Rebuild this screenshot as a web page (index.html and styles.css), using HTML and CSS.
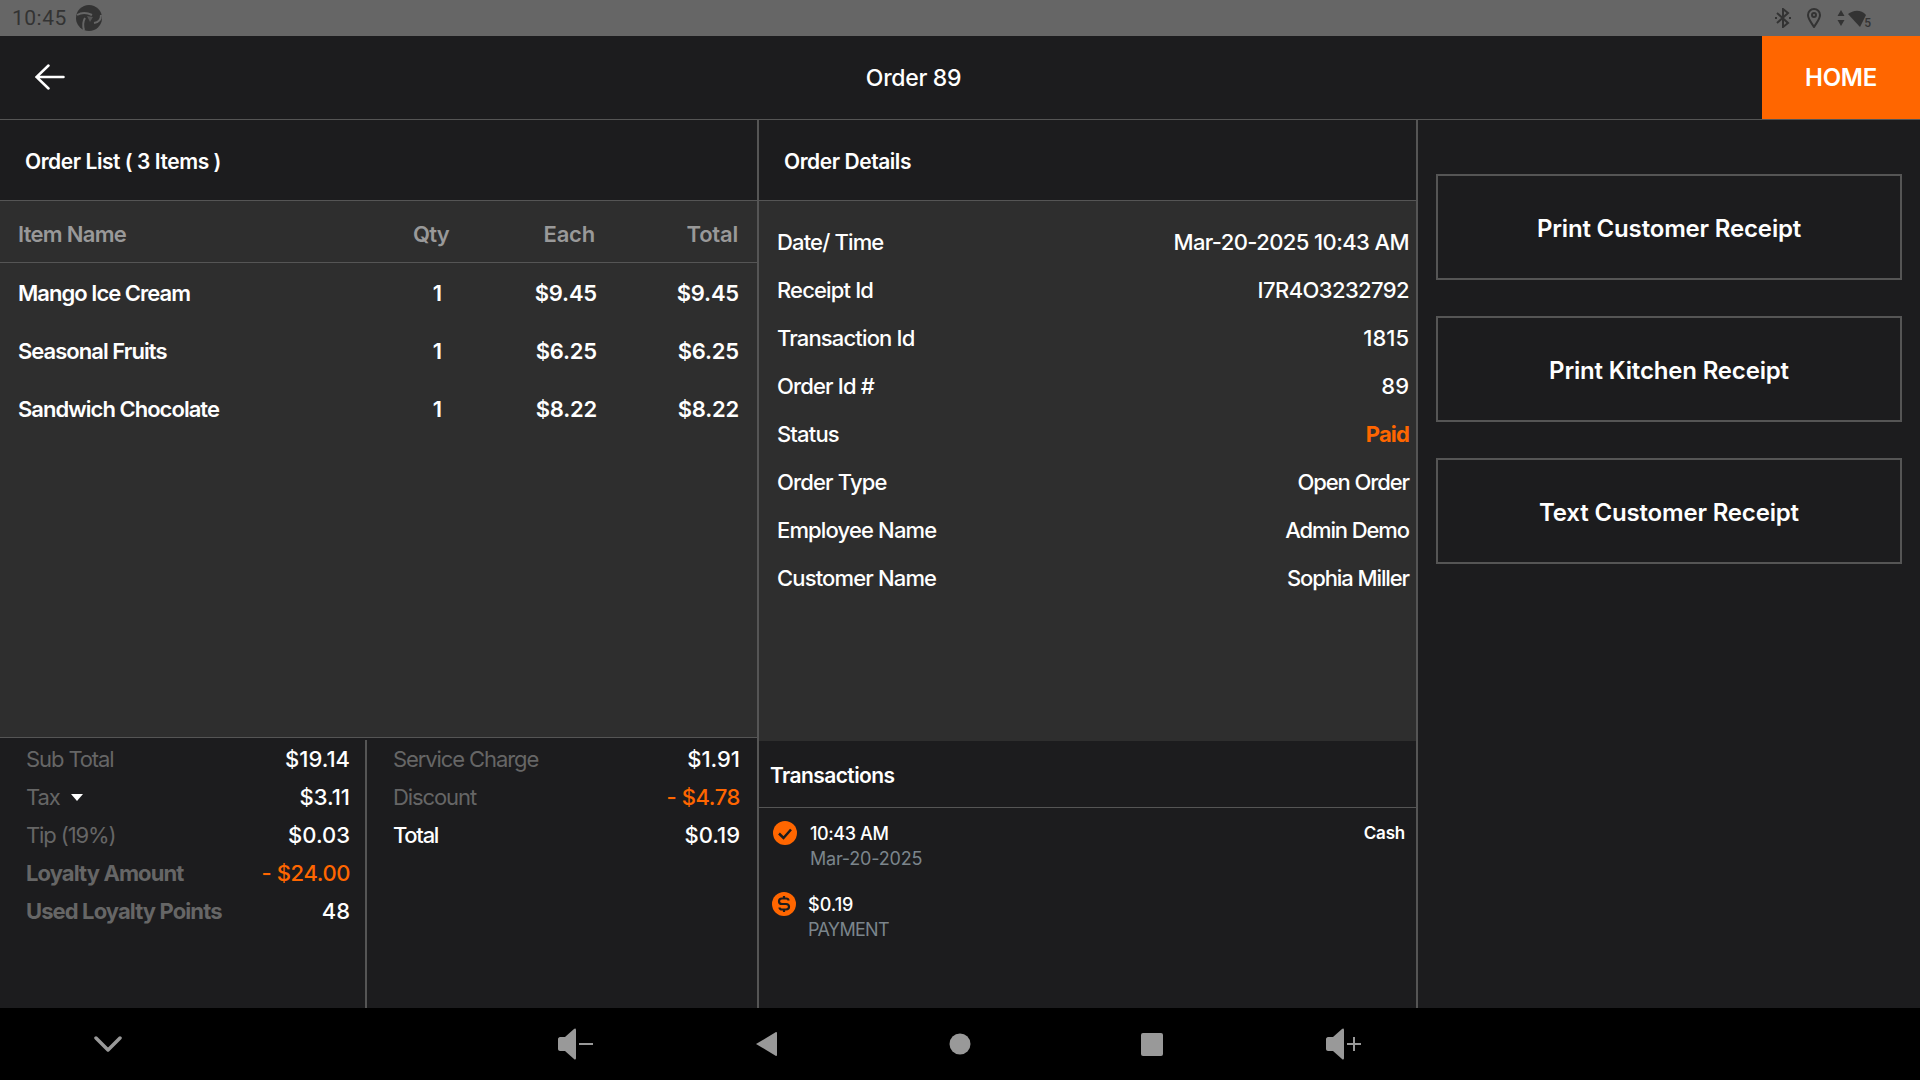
FILE: index.html
```html
<!DOCTYPE html>
<html lang="en">
<head>
  <meta charset="UTF-8">
  <title>Order 89</title>
  <link rel="stylesheet" href="styles.css">
</head>
<body>
  <div class="status-bar">
    <div class="status-left">
      <span class="clock">10:45</span>
      <svg class="sync-icon" width="26" height="26" viewBox="0 0 26 26">
        <circle cx="13" cy="13" r="13" fill="#333"/>
        <path d="M1 10Q8 6 16 10M25 10Q25 17 18 18M8 25Q6 18 9 13" fill="none" stroke="#666" stroke-width="2"/>
        <path d="M11 11l6 1-3 5z" fill="#555"/>
      </svg>
    </div>
    <div class="status-right">
      <svg width="16" height="20" viewBox="0 0 16 20" fill="none" stroke="#333" stroke-width="2">
        <path d="M2 5l11 10-5 4V1l5 4L2 15"/>
        <path d="M0 10h2M14 10h2" />
      </svg>
      <svg width="14" height="20" viewBox="0 0 14 20" fill="none" stroke="#333" stroke-width="2">
        <path d="M7 19C4 14 1 11 1 7a6 6 0 0 1 12 0c0 4-3 7-6 12z"/>
        <circle cx="7" cy="7" r="2"/>
      </svg>
      <div class="net">
        <svg width="8" height="16" viewBox="0 0 8 16" fill="#333">
          <path d="M4 0l3.500 6H.5zM4 16L.5 10h7z"/>
        </svg>
        <svg width="18" height="17" viewBox="0 0 18 17" fill="#333">
          <path d="M0 4C5 0 13-1 18 5L12 17z"/>
        </svg>
        <span class="net-num">5</span>
      </div>
    </div>
  </div>

  <header class="top-bar">
    <div class="back">
      <svg width="30" height="26" viewBox="0 0 30 26" fill="none" stroke="#fff" stroke-width="2.500" stroke-linecap="round">
        <path d="M1.500 13h27M13.500 1.500L1.500 13l12 11.500"/>
      </svg>
    </div>
    <div class="top-title">Order 89</div>
    <div class="home-btn">HOME</div>
  </header>

  <main class="content">
    <section class="col-list">
      <div class="panel-head">Order List ( 3 Items )</div>
      <div class="list-body">
        <div class="item-row item-head">
          <span class="c-name">Item Name</span>
          <span class="c-qty">Qty</span>
          <span class="c-each">Each</span>
          <span class="c-total">Total</span>
        </div>
        <div class="item-row">
          <span class="c-name">Mango Ice Cream</span>
          <span class="c-qty">1</span>
          <span class="c-each">$9.45</span>
          <span class="c-total">$9.45</span>
        </div>
        <div class="item-row">
          <span class="c-name">Seasonal Fruits</span>
          <span class="c-qty">1</span>
          <span class="c-each">$6.25</span>
          <span class="c-total">$6.25</span>
        </div>
        <div class="item-row">
          <span class="c-name">Sandwich Chocolate</span>
          <span class="c-qty">1</span>
          <span class="c-each">$8.22</span>
          <span class="c-total">$8.22</span>
        </div>
      </div>
      <div class="totals">
        <div class="totals-col">
          <div class="t-row"><span class="t-label">Sub Total</span><span class="num">$19.14</span></div>
          <div class="t-row">
            <span class="t-label">Tax <i class="caret"></i></span><span class="num">$3.11</span>
          </div>
          <div class="t-row"><span class="t-label">Tip (19%)</span><span class="num">$0.03</span></div>
          <div class="t-row"><span class="t-label t-bold">Loyalty Amount</span><span class="num neg">- $24.00</span></div>
          <div class="t-row"><span class="t-label t-bold">Used Loyalty Points</span><span class="num">48</span></div>
        </div>
        <div class="totals-col second">
          <div class="t-row"><span class="t-label">Service Charge</span><span class="num">$1.91</span></div>
          <div class="t-row"><span class="t-label">Discount</span><span class="num neg">- $4.78</span></div>
          <div class="t-row"><span class="t-total">Total</span><span class="num">$0.19</span></div>
        </div>
      </div>
    </section>

    <section class="col-details">
      <div class="panel-head">Order Details</div>
      <div class="details-body">
        <div class="d-row"><span>Date/ Time</span><span class="d-code">Mar-20-2025 10:43 AM</span></div>
        <div class="d-row"><span>Receipt Id</span><span class="d-code">I7R4O3232792</span></div>
        <div class="d-row"><span>Transaction Id</span><span class="num">1815</span></div>
        <div class="d-row"><span>Order Id #</span><span class="num">89</span></div>
        <div class="d-row"><span>Status</span><span class="orange paid">Paid</span></div>
        <div class="d-row"><span>Order Type</span><span class="d-val">Open Order</span></div>
        <div class="d-row"><span>Employee Name</span><span class="d-val">Admin Demo</span></div>
        <div class="d-row"><span>Customer Name</span><span class="d-val">Sophia Miller</span></div>
      </div>
      <div class="transactions">
        <div class="tx-head">Transactions</div>
        <div class="tx-row">
          <svg class="tx-icon" width="24" height="24" viewBox="0 0 24 24">
            <circle cx="12" cy="12" r="12" fill="#ff6600"/>
            <path d="M6 12.500l4.500 4.500L18 8.500" fill="none" stroke="#1c1c1e" stroke-width="2.500"/>
          </svg>
          <div class="tx-text">
            <div class="tx-main">10:43 AM</div>
            <div class="tx-sub">Mar-20-2025</div>
          </div>
          <div class="tx-type">Cash</div>
        </div>
        <div class="tx-row tx-pay">
          <svg class="tx-icon" width="24" height="24" viewBox="0 0 24 24">
            <circle cx="12" cy="12" r="12" fill="#ff6600"/>
            <path d="M16.500 8.500c0-1-1-2-2.500-2h-4c-1.800 0-3 1.100-3 2.700s1.200 2.800 3 2.800h4c1.800 0 3 1.100 3 2.800s-1.200 2.700-3 2.700h-4c-1.500 0-2.500-1-2.500-2M12 4v2.500M12 17.500V20" fill="none" stroke="#1c1c1e" stroke-width="2.200"/>
          </svg>
          <div class="tx-text">
            <div class="tx-main">$0.19</div>
            <div class="tx-sub">PAYMENT</div>
          </div>
        </div>
      </div>
    </section>

    <section class="col-actions">
      <div class="action-btn">Print Customer Receipt</div>
      <div class="action-btn">Print Kitchen Receipt</div>
      <div class="action-btn">Text Customer Receipt</div>
    </section>
  </main>

  <nav class="nav-bar">
    <div class="nav-left">
      <svg width="28" height="18" viewBox="0 0 28 18" fill="none" stroke="#999" stroke-width="3.500" stroke-linecap="round" stroke-linejoin="round">
        <path d="M2 3l12 12L26 3"/>
      </svg>
    </div>
    <div class="nav-slot">
      <svg width="36" height="32" viewBox="0 0 36 32" fill="#999">
        <path d="M2 9h5L16 1c1-1 2-.500 2 1v28c0 1.500-1 2-2 1L7 23H2c-1 0-2-1-2-2V11c0-1 1-2 2-2z"/>
        <rect x="21" y="15" width="14" height="2"/>
      </svg>
    </div>
    <div class="nav-slot">
      <svg class="nav-back" width="21" height="24" viewBox="0 0 21 24" fill="#999">
        <path d="M20 0c.500 0 1 .500 1 1v22c0 .500-.500 1-1 1L0 12z"/>
      </svg>
    </div>
    <div class="nav-slot">
      <svg width="22" height="22" viewBox="0 0 22 22" fill="#999">
        <circle cx="11" cy="11" r="10.500"/>
      </svg>
    </div>
    <div class="nav-slot">
      <svg width="22" height="23" viewBox="0 0 22 23" fill="#999">
        <rect width="22" height="23" rx="2"/>
      </svg>
    </div>
    <div class="nav-slot">
      <svg width="36" height="32" viewBox="0 0 36 32" fill="#999">
        <path d="M2 9h5L16 1c1-1 2-.500 2 1v28c0 1.500-1 2-2 1L7 23H2c-1 0-2-1-2-2V11c0-1 1-2 2-2z"/>
        <path d="M21 15h6V9h2v6h6v2h-6v6h-2v-6h-6z"/>
      </svg>
    </div>
  </nav>
</body>
</html>
```

FILE: styles.css
```css
* {
  margin: 0;
  padding: 0;
  box-sizing: border-box;
}

body {
  width: 1920px;
  height: 1080px;
  display: flex;
  flex-direction: column;
  overflow: hidden;
  background: #1c1c1e;
  color: #fff;
  font-family: 'Inter', sans-serif;
  font-size: 22px;
  font-weight: 500;
  letter-spacing: -0.85px;
}

.orange {
  color: #ff6600;
}

.num {
  letter-spacing: 0;
}

.num.neg {
  color: #ff6600;
  letter-spacing: -0.4px;
}

/* Status bar */
.status-bar {
  height: 36px;
  flex-shrink: 0;
  display: flex;
  justify-content: space-between;
  align-items: center;
  padding: 0 49px 0 12px;
  background: #666;
  color: #333;
}

.status-left {
  display: flex;
  align-items: center;
  gap: 9px;
}

.clock {
  font-family: 'Roboto', sans-serif;
  font-size: 21px;
  font-weight: 400;
  letter-spacing: 0.5px;
}

.status-right {
  display: flex;
  align-items: center;
  gap: 16px;
}

.net {
  display: flex;
  align-items: center;
  gap: 3px;
  position: relative;
  padding-right: 5px;
}

.net-num {
  position: absolute;
  right: 0;
  bottom: -2px;
  font-family: 'Roboto', sans-serif;
  font-size: 12px;
  line-height: 11px;
  letter-spacing: 0;
}

/* Top bar */
.top-bar {
  height: 84px;
  flex-shrink: 0;
  display: flex;
  align-items: center;
  border-bottom: 1px solid #555;
}

.back {
  width: 140px;
  padding-left: 35px;
  display: flex;
  align-items: center;
  margin-top: -2px;
}

.top-title {
  flex: 1;
  text-align: center;
  font-size: 23px;
  letter-spacing: -0.3px;
  padding: 1px 75px 0 0;
}

.home-btn {
  width: 158px;
  height: 83px;
  display: flex;
  align-items: center;
  justify-content: center;
  background: #ff6600;
  font-size: 24px;
  font-weight: 600;
  letter-spacing: -0.3px;
}

/* Main columns */
.content {
  flex: 1;
  display: flex;
  min-height: 0;
}

.col-list {
  width: 759px;
  display: flex;
  flex-direction: column;
  border-right: 2px solid #555;
}

.col-details {
  width: 659px;
  display: flex;
  flex-direction: column;
  border-right: 2px solid #555;
}

.col-actions {
  flex: 1;
  display: flex;
  flex-direction: column;
  gap: 36px;
  padding: 54px 18px 0 18px;
}

.panel-head {
  height: 81px;
  flex-shrink: 0;
  display: flex;
  align-items: center;
  padding: 2px 0 0 25px;
  border-bottom: 1px solid #555;
  font-size: 21px;
  font-weight: 600;
  letter-spacing: -0.45px;
}

/* Order list */
.list-body {
  height: 537px;
  flex-shrink: 0;
  background: #2e2e2e;
  border-bottom: 1px solid #555;
}

.item-row {
  height: 58px;
  display: flex;
  align-items: center;
  padding: 0 18px;
  font-weight: 600;
  letter-spacing: -0.97px;
}

.item-head {
  height: 62px;
  margin-bottom: 1px;
  padding-top: 5px;
  border-bottom: 1px solid #555;
  color: #999;
  letter-spacing: -0.7px;
}

.c-name {
  flex: 1;
}

.c-qty {
  width: 40px;
  text-align: center;
}

.c-each {
  width: 140px;
  text-align: right;
  letter-spacing: -0.2px;
}

.c-total {
  width: 142px;
  text-align: right;
  letter-spacing: -0.2px;
}

.item-head .c-qty {
  margin: 0 4px 0 -4px;
  text-align: left;
}

.item-head .c-each {
  padding-right: 2px;
}

.item-head .c-total {
  padding-right: 1px;
}

/* Totals under the list */
.totals {
  flex: 1;
  display: flex;
  padding-top: 2px;
}

.totals-col {
  width: 367px;
  padding: 0 15px 0 26px;
  border-right: 2px solid #555;
}

.totals-col.second {
  flex: 1;
  padding: 0 17px 0 26px;
  border-right: 0;
}

.t-row {
  height: 38px;
  display: flex;
  justify-content: space-between;
  align-items: center;
}

.t-label {
  color: #666;
  font-weight: 400;
  letter-spacing: -1.1px;
}

.t-bold {
  font-weight: 700;
  letter-spacing: -0.9px;
}

.t-total {
  letter-spacing: -1.3px;
}

.caret {
  display: inline-block;
  margin: 0 0 4px 6px;
  border-left: 6px solid transparent;
  border-right: 6px solid transparent;
  border-top: 7px solid #fff;
}

/* Details */
.details-body {
  height: 540px;
  flex-shrink: 0;
  padding: 17px 7px 0 18px;
  background: #2e2e2e;
}

.d-row {
  height: 48px;
  display: flex;
  justify-content: space-between;
  align-items: center;
}

.d-code {
  letter-spacing: -0.6px;
}

.d-val {
  letter-spacing: -1.1px;
}

.paid {
  font-weight: 700;
}

.transactions {
  flex: 1;
  border-left: 1px solid #555;
  margin-left: -1px;
}

.tx-head {
  height: 67px;
  display: flex;
  align-items: center;
  padding: 2px 0 0 11px;
  border-bottom: 1px solid #555;
  font-size: 21px;
  font-weight: 600;
  letter-spacing: -0.6px;
}

.tx-row {
  display: flex;
  gap: 13px;
  padding: 13px 11px 0 14px;
  height: 84px;
}

.tx-pay {
  gap: 12px;
  padding-top: 0;
  padding-left: 13px;
}

.tx-text {
  font-size: 18px;
  line-height: 25px;
  letter-spacing: -0.4px;
}

.tx-sub {
  color: #7b858c;
  font-weight: 400;
  letter-spacing: -0.2px;
}

.tx-pay .tx-sub {
  letter-spacing: -0.7px;
}

.tx-pay .tx-main {
  letter-spacing: 0;
}

.tx-type {
  margin-left: auto;
  font-size: 17px;
  font-weight: 600;
  line-height: 25px;
  letter-spacing: -0.2px;
}

/* Actions */
.action-btn {
  height: 106px;
  display: flex;
  align-items: center;
  justify-content: center;
  padding-top: 2px;
  border: 2px solid #555;
  font-size: 24px;
  font-weight: 600;
  letter-spacing: -0.17px;
}

/* Android nav */
.nav-bar {
  height: 72px;
  flex-shrink: 0;
  display: flex;
  align-items: center;
  background: #000;
}

.nav-left {
  width: 480px;
  padding-left: 94px;
  display: flex;
}

.nav-slot {
  width: 192px;
  display: flex;
  justify-content: center;
}

.nav-back {
  margin-right: 3px;
}
```
